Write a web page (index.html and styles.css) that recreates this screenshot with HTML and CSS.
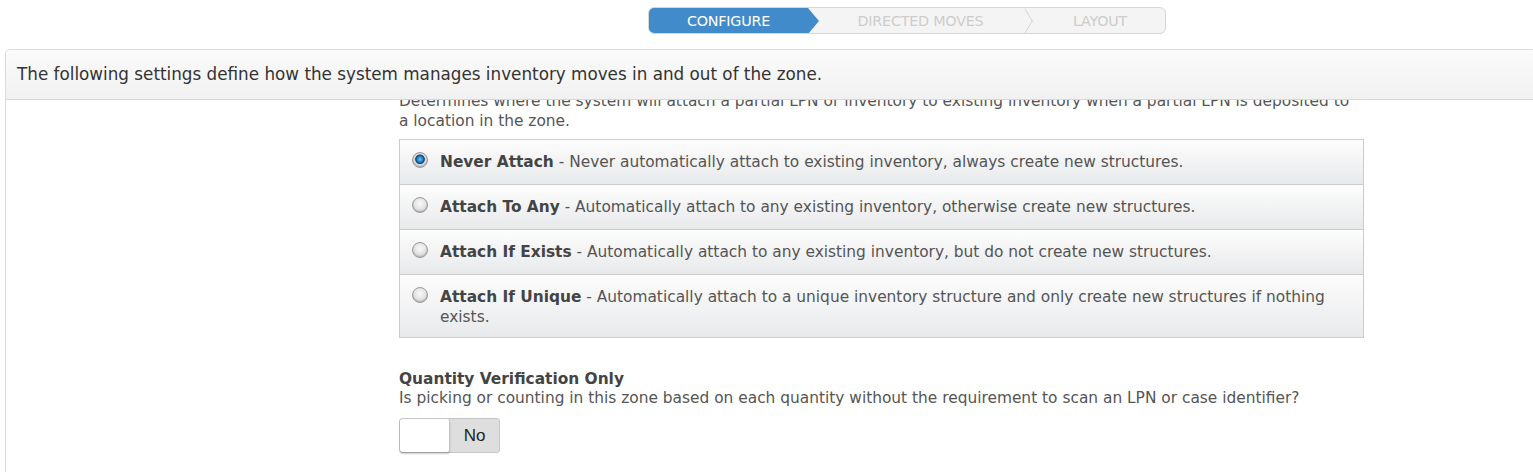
FILE: index.html
```html
<!DOCTYPE html>
<html lang="en">
<head>
  <meta charset="UTF-8">
  <title>Zone Setup</title>
  <link rel="stylesheet" href="styles.css">
</head>
<body>

  <div class="steps">
    <div class="step active">CONFIGURE</div>
    <div class="step middle">DIRECTED MOVES</div>
    <div class="step last">LAYOUT</div>
  </div>

  <div class="panel">
    <div class="panel-header">The following settings define how the system manages inventory moves in and out of the zone.</div>

    <div class="panel-body">
      <div class="settings">
        <p class="help">Determines where the system will attach a partial LPN or inventory to existing inventory when a partial LPN is deposited to a location in the zone.</p>

        <div class="options">
          <label class="option">
            <span class="radio checked"></span>
            <b>Never Attach</b> - Never automatically attach to existing inventory, always create new structures.
          </label>
          <label class="option">
            <span class="radio"></span>
            <b>Attach To Any</b> - Automatically attach to any existing inventory, otherwise create new structures.
          </label>
          <label class="option">
            <span class="radio"></span>
            <b>Attach If Exists</b> - Automatically attach to any existing inventory, but do not create new structures.
          </label>
          <label class="option">
            <span class="radio"></span>
            <b>Attach If Unique</b> - Automatically attach to a unique inventory structure and only create new structures if nothing exists.
          </label>
        </div>

        <div class="field">
          <div class="field-title">Quantity Verification Only</div>
          <div class="field-help">Is picking or counting in this zone based on each quantity without the requirement to scan an LPN or case identifier?</div>
          <div class="toggle">
            <span class="knob"></span>
            <span class="toggle-label">No</span>
          </div>
        </div>
      </div>
    </div>
  </div>

</body>
</html>
```

FILE: styles.css
```css
html, body {
  margin: 0;
  height: 100%;
  overflow: hidden;
}
body {
  font-family: "DejaVu Sans", Verdana, sans-serif;
  font-size: 15.4px;
  color: #555;
  background-color: #fff;
}

/* wizard steps */
.steps {
  display: flex;
  width: 516px;
  height: 25px;
  margin: 7px 0 0 648px;
  border: 1px solid #d6d6d6;
  border-radius: 6px;
  background-color: #f4f4f4;
  overflow: hidden;
}
.step {
  position: relative;
  display: flex;
  align-items: center;
  justify-content: center;
  color: #ccc;
  font-size: 14.3px;
  letter-spacing: -0.2px;
}
.step.active {
  width: 159px;
  background-color: #428bca;
  color: #fff;
  z-index: 1;
}
.step.active::after {
  content: "";
  position: absolute;
  left: 159px;
  top: 0;
  border-top: 13px solid transparent;
  border-bottom: 13px solid transparent;
  border-left: 11px solid #428bca;
}
.step.middle {
  width: 213px;
  padding-left: 12px;
  box-sizing: border-box;
}
.step.middle::after {
  content: "";
  position: absolute;
  right: -13px;
  top: -4px;
  width: 17px;
  height: 17px;
  border-top: 1px solid #cfcfcf;
  border-right: 1px solid #cfcfcf;
  transform: translateY(8px) scaleX(0.6) rotate(45deg);
}
.step.last {
  flex: 1;
  padding-left: 14px;
}

/* panel */
.panel {
  margin: 15px -4px 0 5px;
  border: 1px solid #dcdcdc;
  border-radius: 5px 5px 0 0;
}
.panel-header {
  height: 49px;
  padding-left: 11px;
  line-height: 49px;
  font-size: 16.8px;
  color: #333;
  background: linear-gradient(#fbfbfb, #f1f1f1);
  border-bottom: 1px solid #d7d7d7;
  border-radius: 5px 5px 0 0;
}
.panel-body {
  height: 380px;
  overflow: hidden;
}
.settings {
  width: 965px;
  margin: -9px 0 0 393px;
}
.help {
  margin: 0;
  padding-right: 6px;
  line-height: 20px;
}

/* radio list */
.options {
  margin-top: 8px;
  border: 1px solid #ccc;
}
.option {
  position: relative;
  display: block;
  padding: 12px 24px 12px 40px;
  line-height: 20px;
  background: linear-gradient(#fdfdfd, #e8e9eb);
  border-top: 1px solid #ccc;
}
.option:first-child {
  border-top: none;
}
.option:last-child {
  padding-bottom: 10px;
}
.option b {
  color: #444;
}
.radio {
  position: absolute;
  left: 12px;
  top: 12px;
  width: 16px;
  height: 16px;
  box-sizing: border-box;
  border-radius: 50%;
  border: 1px solid #9a9a9a;
  background: radial-gradient(circle at 50% 40%, #fafafa 0%, #e4e4e4 50%, #b8b8b8 100%);
  box-shadow: inset 0 -1px 1px rgba(0, 0, 0, 0.15);
}
.radio.checked {
  background: radial-gradient(circle at 50% 45%, #6cc4f5 0%, #1f7ec4 28%, #0b3f6b 42%, #dcdcdc 50%, #b5b5b5 100%);
}

/* quantity verification */
.field {
  margin-top: 32px;
}
.field-title {
  font-weight: bold;
  line-height: 19px;
  color: #444;
}
.field-help {
  line-height: 19px;
}
.toggle {
  display: flex;
  width: 101px;
  height: 35px;
  margin-top: 10px;
  box-sizing: border-box;
  border: 1px solid #c6c6c6;
  border-radius: 3px;
  background-color: #dedede;
}
.knob {
  width: 49px;
  background-color: #fff;
  border-right: 1px solid #c6c6c6;
  border-radius: 3px;
  box-shadow: 0 2px 2px rgba(0, 0, 0, 0.2);
}
.toggle-label {
  flex: 1;
  display: flex;
  align-items: center;
  justify-content: center;
  font-family: "Liberation Sans", Arial, sans-serif;
  font-size: 17px;
  color: #222;
}
```
